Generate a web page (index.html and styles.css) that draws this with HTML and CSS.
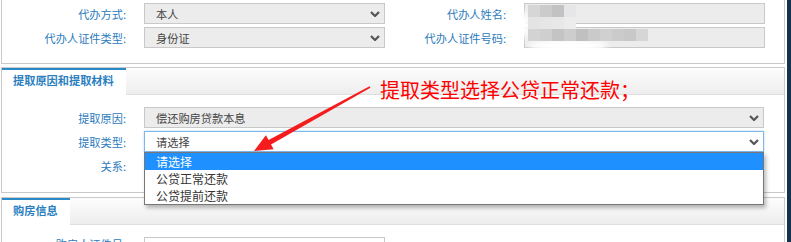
FILE: index.html
```html
<!DOCTYPE html>
<html lang="zh-CN">
<head>
<meta charset="utf-8">
<title>提取信息</title>
<link rel="stylesheet" href="styles.css">
</head>
<body>
<div class="page">
  <section class="panel panel-top">
    <div class="row">
      <span class="label">代办方式:</span>
      <div class="field select disabled"><span class="value">本人</span><svg class="chev" viewBox="0 0 10 6"><path d="M1 1 L5 5 L9 1"/></svg></div>
      <span class="label label-r">代办人姓名:</span>
      <div class="field input disabled"></div>
    </div>
    <div class="row">
      <span class="label">代办人证件类型:</span>
      <div class="field select disabled"><span class="value">身份证</span><svg class="chev" viewBox="0 0 10 6"><path d="M1 1 L5 5 L9 1"/></svg></div>
      <span class="label label-r">代办人证件号码:</span>
      <div class="field input disabled"></div>
    </div>
  </section>

  <section class="panel panel-mid">
    <div class="tabbar"><div class="tab">提取原因和提取材料</div></div>
    <div class="panel-body">
      <div class="row">
        <span class="label">提取原因:</span>
        <div class="field select wide disabled"><span class="value">偿还购房贷款本息</span><svg class="chev" viewBox="0 0 10 6"><path d="M1 1 L5 5 L9 1"/></svg></div>
      </div>
      <div class="row">
        <span class="label">提取类型:</span>
        <div class="field select wide focused"><span class="value">请选择</span><svg class="chev" viewBox="0 0 10 6"><path d="M1 1 L5 5 L9 1"/></svg>
          <ul class="options">
            <li class="option active">请选择</li>
            <li class="option">公贷正常还款</li>
            <li class="option">公贷提前还款</li>
          </ul>
        </div>
      </div>
      <div class="row">
        <span class="label">关系:</span>
        <div class="field select wide"><span class="value"></span></div>
      </div>
    </div>
  </section>

  <section class="panel panel-bottom">
    <div class="tabbar"><div class="tab tab-short">购房信息</div></div>
    <div class="panel-body">
      <div class="row">
        <span class="label label-top">购房人证件号:</span>
        <div class="field input"></div>
      </div>
    </div>
  </section>

  <div class="mosaic">
    <div class="blob blob-a"></div>
    <div class="blob blob-b"></div>
    <div class="mrow">
      <i style="background:#d6d6d6"></i><i style="background:#cbcbcb"></i><i style="background:#c2c2c2"></i><i style="background:#e6e6e8"></i>
    </div>
    <div class="mrow">
      <i style="background:#e4e4e4"></i><i style="background:#e6e6e6"></i><i style="background:#e8e8e8"></i><i style="background:#ececec"></i>
    </div>
    <div class="mrow">
      <i style="background:#d3d3d3"></i><i style="background:#cfcfcf"></i><i style="background:#c4c4c4"></i><i style="background:#cdcdcd"></i><i style="background:#c0c0c0"></i><i style="background:#cacaca"></i><i style="background:#d0d0d0"></i><i style="background:#cbcbcb"></i><i style="background:#c8c8c8"></i><i style="background:#d6d6d6"></i>
    </div>
  </div>

  <div class="annotation">
    <svg class="arrow" width="791" height="242" viewBox="0 0 791 242">
      <polygon points="370.4,87.8 369.6,86.2 268.6,140.1 265.9,135.3 254,151 273.7,149.3 271,144.5"/>
    </svg>
    <p class="note">提取类型选择公贷正常还款；</p>
  </div>
</div>
</body>
</html>
```
FILE: styles.css
```css
* { box-sizing: border-box; }
html, body { margin: 0; padding: 0; }
body {
  background: #15324d;
  font-family: "Noto Sans CJK SC", "Noto Sans", sans-serif;
  font-size: 11.2px;
  color: #444;
}
.page {
  position: relative;
  width: 787px;
  height: 242px;
  overflow: hidden;
  background: #fff;
}
.panel {
  margin-left: 1px;
  width: 784px;
  border: 1px solid #c9c9c9;
}
.panel-top {
  border-top: none;
  padding: 3px 0 15px;
}
.panel-mid { margin-top: 3px; }
.panel-bottom { margin-top: 4px; }
.panel-mid .panel-body { padding: 12px 0 16px; }
.panel-bottom .panel-body { padding: 12px 0 16px; }

.row {
  display: flex;
  align-items: center;
  height: 21px;
}
.row + .row { margin-top: 3px; }

.label {
  width: 124px;
  margin-right: 18px;
  text-align: right;
  color: #2d7bbd;
  white-space: nowrap;
}
.label-r { width: 121px; }
.label-top {
  align-self: flex-start;
  line-height: 14px;
}

.field {
  position: relative;
  width: 241px;
  height: 21px;
  border: 1px solid #c8c8c8;
  background: #fff;
  display: flex;
  align-items: center;
  padding-left: 11px;
}
.field.wide { width: 620px; }
.field.disabled { background: #ececec; }
.field.focused {
  border-color: #80b6ea;
  box-shadow: 0 0 2px rgba(102, 175, 233, 0.5);
}
.value { color: #444; white-space: nowrap; }
.chev {
  width: 10px;
  height: 6px;
  margin-left: auto;
  margin-right: 4px;
}
.chev path {
  fill: none;
  stroke: #555;
  stroke-width: 2.2;
}

.tabbar {
  height: 27px;
  background: linear-gradient(#fdfdfd, #ededed);
  border-bottom: 1px solid #dedede;
  display: flex;
}
.tab {
  width: 124px;
  height: 27px;
  background: #fff;
  border-top: 2px solid #2a8ac6;
  padding-left: 11px;
  line-height: 20px;
  font-weight: bold;
  color: #2b7fbf;
  white-space: nowrap;
}
.tab-short { width: 68px; }

.options {
  position: absolute;
  left: -1px;
  top: 20px;
  width: 620px;
  margin: 0;
  padding: 0;
  list-style: none;
  background: #fff;
  border: 1px solid #777;
  box-shadow: 2px 3px 4px rgba(0, 0, 0, 0.28);
  z-index: 5;
}
.option {
  height: 17px;
  line-height: 17px;
  padding-left: 11px;
  font-size: 12px;
  color: #333;
}
.option.active {
  background: #1e90ff;
  color: #fff;
}

.mosaic {
  position: absolute;
  left: 528px;
  top: 5px;
}
.mrow { display: flex; height: 12px; position: relative; }
.mrow i { display: block; width: 12px; height: 12px; }
.blob {
  position: absolute;
  background: #fff;
  filter: blur(3px);
  border-radius: 50%;
}
.blob-a { left: -14px; top: 6px; width: 16px; height: 28px; }
.blob-b { left: 0; top: 34px; width: 80px; height: 14px; }

.annotation {
  position: absolute;
  left: 0;
  top: 0;
  width: 791px;
  height: 242px;
  pointer-events: none;
  z-index: 10;
}
.arrow { position: absolute; left: 0; top: 0; }
.arrow polygon { fill: #f41c1c; }
.note {
  position: absolute;
  left: 380px;
  top: 77px;
  margin: 0;
  font-size: 20px;
  line-height: 26px;
  color: #ff0000;
  white-space: nowrap;
}
```
